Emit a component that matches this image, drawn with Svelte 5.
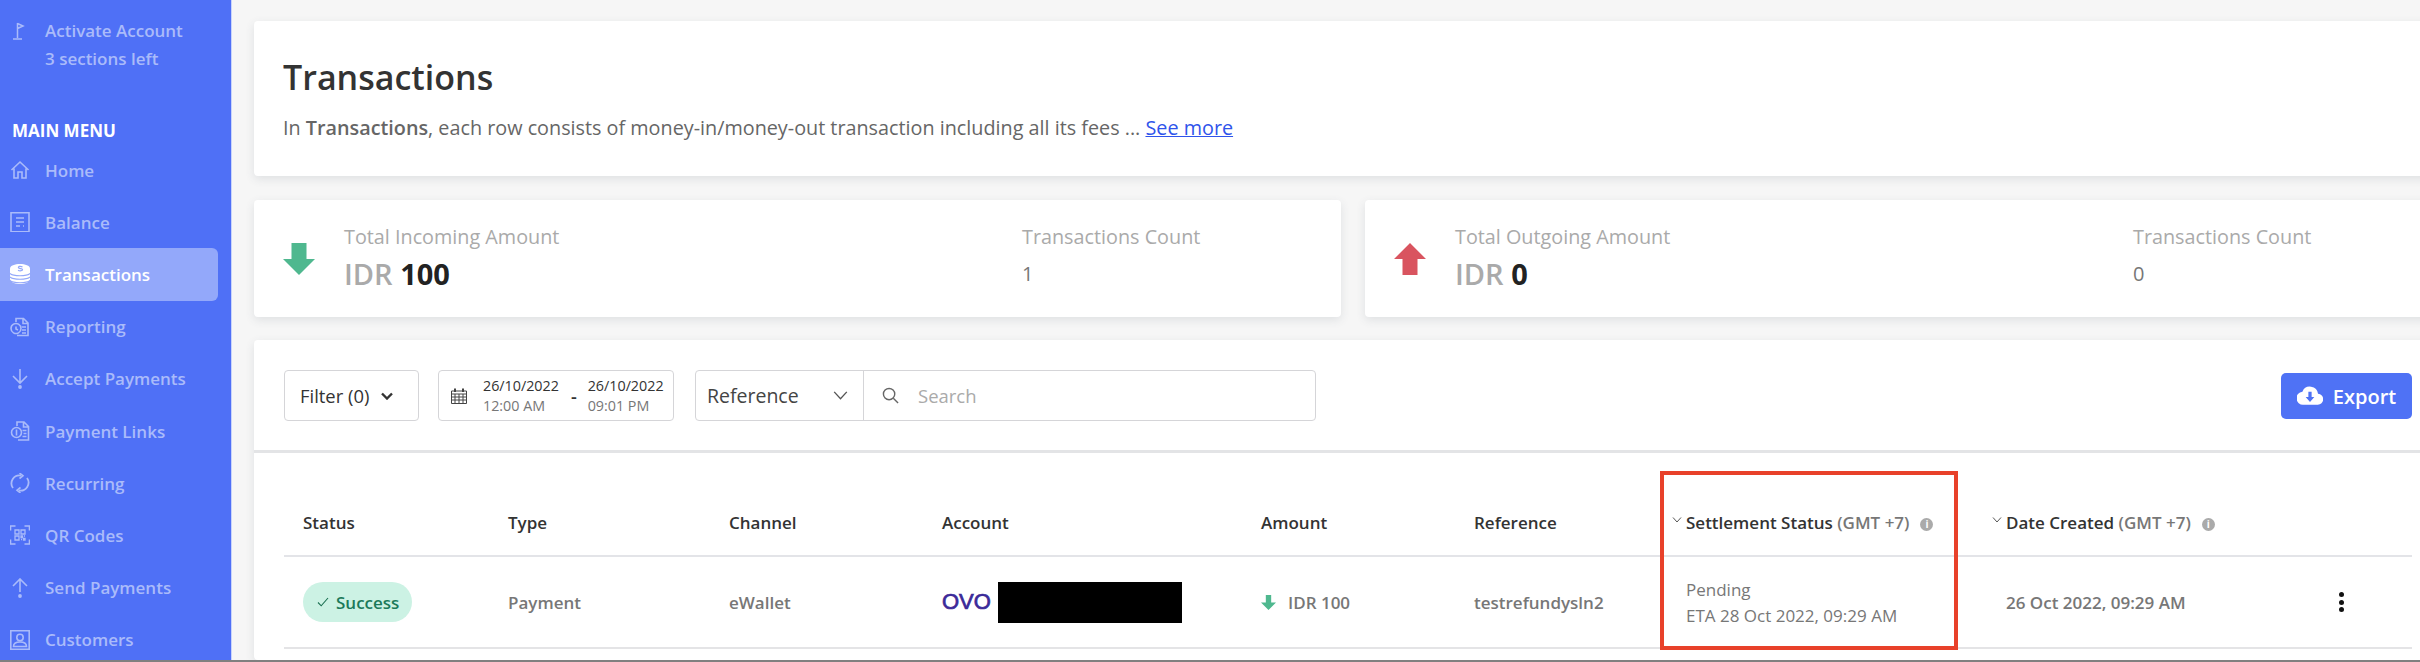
<script>
  const menu = [
    { label: 'Home', icon: 'home' },
    { label: 'Balance', icon: 'balance' },
    { label: 'Transactions', icon: 'coins', active: true },
    { label: 'Reporting', icon: 'report' },
    { label: 'Accept Payments', icon: 'accept' },
    { label: 'Payment Links', icon: 'links' },
    { label: 'Recurring', icon: 'recur' },
    { label: 'QR Codes', icon: 'qr' },
    { label: 'Send Payments', icon: 'send' },
    { label: 'Customers', icon: 'customers' }
  ];
  const stats = [
    { dir: 'in', label: 'Total Incoming Amount', amount: '100', count: '1' },
    { dir: 'out', label: 'Total Outgoing Amount', amount: '0', count: '0' }
  ];
</script>

<div class="page">
  <aside class="sidebar">
    <div class="activate">
      <svg class="flag" viewBox="0 0 14 18" width="14" height="18" fill="none" stroke="currentColor" stroke-width="1.500">
        <path d="M6.500 1v15M2 17h9M6.500 1.500 12 4 6.500 6.500" />
      </svg>
      <div>
        <div>Activate Account</div>
        <div>3 sections left</div>
      </div>
    </div>
    <div class="menu-title">MAIN MENU</div>
    <nav>
      {#each menu as item}
        <div class="item" class:active={item.active}>
          <svg viewBox="0 0 20 20" width="20" height="20" fill="none" stroke="currentColor" stroke-width="1.600">
            {#if item.icon === 'home'}
              <path d="M1.500 10 10 2l8.500 8M4 8.500V18h4v-6h4v6h4V8.500" />
            {:else if item.icon === 'balance'}
              <path d="M1 .8h18v19H1zM6 6h8M6 10h8M6 14h4M13 14h1" />
            {:else if item.icon === 'coins'}
              <path fill="currentColor" stroke="none" d="M10 0c5 0 10 1.500 10 4.500V15c0 3-5 5-10 5S0 18 0 15V4.500C0 1.500 5 0 10 0z" />
              <path stroke="#93a8fa" stroke-width="1.200" d="M0 9.500c3 3 17 3 20 0M0 13c3 3 17 3 20 0M0 16.500c3 3 17 3 20 0M12.500 3c-2-1.200-4.500-.5-4 .7s3.800.6 4 1.800-2.500 1.800-4.500.7" />
            {:else if item.icon === 'report'}
              <path d="M6 5V1.500h7.500L18 6v12.500H7M13 2v4.500h5M1 11.500a5 5 0 1 1 0 .01M6 9.500v2.500l2 1M12 10h4M12 13h4M12 16h4" />
            {:else if item.icon === 'accept'}
              <path d="M10 0v13M3 7l7 7 7-7" />
              <circle cx="10" cy="18" r="1.900" fill="currentColor" stroke="none" />
            {:else if item.icon === 'links'}
              <path d="M7 5V1h7l4.500 4.500V19H8M13.500 1.500V6h5" />
              <circle cx="6.500" cy="11.500" r="5" />
              <path d="M6.500 8.500v6M12.500 9.500h4M13.500 12.500h3M12.500 15.500h4" />
            {:else if item.icon === 'recur'}
              <path d="M3 15a8 8 0 0 1 8-12.500M17 5a8 8 0 0 1-8 12.500" stroke-width="1.800" />
              <path d="M9.500 0 13 2.800 9.500 5.500M10.500 14.500 7 17.200l3.500 2.800" />
            {:else if item.icon === 'qr'}
              <path d="M.5 5.500V1h5M14.500 1h5v4.500M19.500 14.500V19h-5M5.500 19h-5v-4.500" />
              <path stroke-width="1.300" d="M5 5h4v4H5zM11 5h4v4h-4zM5 11h4v4H5zM11 11h1.500v1.500H11zM13.500 13.500H15V15h-1.500zM11 14.500h1M14 11h1" />
            {:else if item.icon === 'send'}
              <path d="M10 14V1M3 8l7-7 7 7" />
              <circle cx="10" cy="18" r="1.900" fill="currentColor" stroke="none" />
            {:else}
              <path d="M.8.800h18.400v18.400H.8z" />
              <circle cx="10" cy="7.500" r="3.200" />
              <path d="M3.500 16.500c0-3 3-4.500 6.500-4.500s6.500 1.500 6.500 4.500z" />
            {/if}
          </svg>
          <span>{item.label}</span>
        </div>
      {/each}
    </nav>
  </aside>

  <main>
    <section class="card head">
      <h1>Transactions</h1>
      <p>In <strong>Transactions</strong>, each row consists of money-in/money-out transaction including all its fees ... <a href="#more">See more</a></p>
    </section>

    <div class="stats">
      {#each stats as s}
        <section class="card stat">
          <svg class="big-arrow" viewBox="0 0 32 32" width="32" height="32">
            {#if s.dir === 'in'}
              <path fill="#4fb88f" d="M8.500 0h15v16H32L16 32 0 16h8.500z" />
            {:else}
              <path fill="#d9545f" d="M16 0l16 16h-8.500v16h-15V16H0z" />
            {/if}
          </svg>
          <div class="stat-main">
            <div class="stat-label">{s.label}</div>
            <div class="stat-value">IDR <b>{s.amount}</b></div>
          </div>
          <div class="stat-count">
            <div class="stat-label">Transactions Count</div>
            <div class="count">{s.count}</div>
          </div>
        </section>
      {/each}
    </div>

    <section class="card panel">
      <div class="toolbar">
        <button class="box filter">Filter (0)
          <svg viewBox="0 0 12 8" width="12" height="8" fill="none" stroke="#333" stroke-width="2.400"><path d="M1 1.500l5 5 5-5" /></svg>
        </button>
        <div class="box dates">
          <svg viewBox="0 0 16 16" width="16" height="16" fill="none" stroke="#444" stroke-width="1">
            <path d="M.5 3h15v12.500H.5zM.5 6h15M.5 9h15M.5 12h15M4 6v9.500M8 6v9.500M12 6v9.500" />
            <path d="M4 .5v3.500M12 .5v3.500" stroke-width="2" />
          </svg>
          <div class="date"><span>26/10/2022</span><span class="time">12:00 AM</span></div>
          <span class="dash">-</span>
          <div class="date"><span>26/10/2022</span><span class="time">09:01 PM</span></div>
        </div>
        <div class="box searchbox">
          <div class="ref">Reference
            <svg viewBox="0 0 16 10" width="15" height="9" fill="none" stroke="#555" stroke-width="1.500"><path d="M1 1l7 7.500L15 1" /></svg>
          </div>
          <div class="search">
            <svg viewBox="0 0 18 18" width="17" height="17" fill="none" stroke="#666" stroke-width="1.500"><circle cx="7.500" cy="7.500" r="6" /><path d="M12 12l5 5" /></svg>
            <span>Search</span>
          </div>
        </div>
        <button class="export">
          <svg viewBox="0 0 24 20" width="26" height="22"><path fill="#fff" d="M19.400 8A7.500 7.500 0 0 0 5 6 6 6 0 0 0 6 18h13a5 5 0 0 0 .4-10z" /><path fill="#4f72f5" d="M10.500 6h3v5H16l-4 4.500L8 11h2.500z" /></svg>
          Export
        </button>
      </div>

      <div class="table-wrap">
        <table>
          <colgroup>
            <col style="width:224px" /><col style="width:221px" /><col style="width:213px" /><col style="width:319px" />
            <col style="width:213px" /><col style="width:186px" /><col style="width:320px" /><col style="width:359px" /><col />
          </colgroup>
          <thead>
            <tr>
              <th>Status</th>
              <th>Type</th>
              <th>Channel</th>
              <th>Account</th>
              <th>Amount</th>
              <th>Reference</th>
              <th class="sorted">
                <svg class="caret" viewBox="0 0 10 6" width="10" height="6" fill="none" stroke="#555"><path d="M1 .5l4 4.500 4-4.500" /></svg>
                Settlement Status <em>(GMT +7)</em><i class="info">i</i>
              </th>
              <th class="sorted">
                <svg class="caret" viewBox="0 0 10 6" width="10" height="6" fill="none" stroke="#555"><path d="M1 .5l4 4.500 4-4.500" /></svg>
                Date Created <em>(GMT +7)</em><i class="info">i</i>
              </th>
              <th></th>
            </tr>
          </thead>
          <tbody>
            <tr>
              <td><span class="pill"><svg viewBox="0 0 12 10" width="12" height="10" fill="none" stroke="#1b6f52" stroke-width="1.100"><path d="M1 5.500 4.200 8.800 11 1" /></svg>Success</span></td>
              <td>Payment</td>
              <td>eWallet</td>
              <td><div class="account"><span class="ovo">OVO</span><span class="redact"></span></div></td>
              <td>
                <div class="amount">
                  <svg viewBox="0 0 14 14" width="15" height="15"><path fill="#4fb88f" d="M4.500 0h5v7H14l-7 7-7-7h4.500z" /></svg>
                  IDR 100
                </div>
              </td>
              <td>testrefundysln2</td>
              <td class="sorted"><div class="pending">Pending</div><div>ETA 28 Oct 2022, 09:29 AM</div></td>
              <td class="sorted">26 Oct 2022, 09:29 AM</td>
              <td class="more"><span></span><span></span><span></span></td>
            </tr>
          </tbody>
        </table>
        <div class="highlight"></div>
      </div>
    </section>
  </main>
</div>

<style>
  :global(body) {
    margin: 0;
    background: #f6f6f6;
    overflow: hidden;
  }
  .page {
    display: flex;
    width: 2420px;
    height: 660px;
    border-bottom: 2px solid #808080;
    overflow: hidden;
    font-family: "Open Sans", "Noto Sans", sans-serif;
    color: #333;
  }
  .sidebar {
    flex: 0 0 232px;
    background: #4f70f6;
    color: #aabbfa;
    font-weight: 600;
    font-size: 17px;
    box-sizing: border-box;
    padding-top: 17px;
    border-right: 1px solid #c8d3fb;
  }
  .activate {
    display: flex;
    align-items: flex-start;
    line-height: 27.500px;
    padding-left: 11px;
    gap: 20px;
  }
  .flag {
    margin-top: 5px;
  }
  .menu-title {
    color: #fff;
    font-weight: 700;
    padding-left: 12px;
    margin-top: 48px;
    line-height: 22px;
  }
  nav {
    margin-top: 2px;
  }
  .item {
    display: flex;
    align-items: center;
    gap: 15px;
    width: 218px;
    height: 52.200px;
    box-sizing: border-box;
    padding-left: 10px;
    border-radius: 0 6px 6px 0;
  }
  .item.active {
    background: #93a8fa;
    color: #fff;
  }
  main {
    flex: 1;
    min-width: 0;
    padding: 21px 0 0 22px;
  }
  .card {
    background: #fff;
    border-radius: 4px;
    box-shadow: 0 3px 10px rgba(60, 70, 90, 0.12);
    width: 2300px;
  }
  .head {
    height: 155px;
    box-sizing: border-box;
    padding: 35px 29px 0;
  }
  h1 {
    margin: 0;
    font-size: 34px;
    font-weight: 600;
    line-height: 42px;
    color: #333;
  }
  .head p {
    margin: 17px 0 0;
    font-size: 19.800px;
    line-height: 26px;
    color: #666;
  }
  .head strong {
    font-weight: 600;
  }
  .head a {
    color: #2f54eb;
  }
  .stats {
    display: flex;
    gap: 24px;
    margin-top: 24px;
    width: 2300px;
  }
  .stat {
    flex: 0 0 1087px;
    height: 117px;
    box-sizing: border-box;
    display: flex;
    align-items: center;
    padding-left: 29px;
  }
  .stat-main {
    width: 678px;
    margin-left: 29px;
  }
  .stat-label {
    font-size: 19.800px;
    line-height: 26px;
    color: #aaa;
  }
  .stat-value {
    font-size: 29px;
    font-weight: 600;
    line-height: 38px;
    margin-top: 5px;
    color: #aaa;
  }
  .stat-value b {
    color: #222;
    font-weight: 700;
  }
  .count {
    font-size: 20px;
    line-height: 38px;
    margin-top: 5px;
    color: #777;
  }
  .panel {
    margin-top: 23px;
    height: 320px;
    box-sizing: border-box;
  }
  .toolbar {
    display: flex;
    align-items: flex-start;
    height: 113px;
    box-sizing: border-box;
    padding: 30px 0 0 30px;
    border-bottom: 3px solid #e3e4e6;
    width: 2300px;
  }
  .box {
    height: 51px;
    box-sizing: border-box;
    border: 1px solid #d5d5d8;
    border-radius: 4px;
    background: #fff;
    display: flex;
    align-items: center;
    font-family: inherit;
  }
  .filter {
    width: 135px;
    font-size: 18.400px;
    color: #333;
    padding: 0 0 0 15px;
    gap: 12px;
  }
  .dates {
    margin-left: 19px;
    width: 236px;
    padding-left: 12px;
    font-size: 14.300px;
    color: #333;
  }
  .date {
    display: flex;
    flex-direction: column;
    line-height: 20px;
    margin-left: 16px;
  }
  .dates .date:last-child {
    margin-left: 11px;
  }
  .time {
    color: #777;
  }
  .dash {
    margin-left: 12px;
    font-size: 18px;
    font-weight: 600;
  }
  .searchbox {
    margin-left: 21px;
    width: 621px;
    font-size: 18.500px;
  }
  .ref {
    width: 168px;
    height: 100%;
    box-sizing: border-box;
    border-right: 1px solid #d5d5d8;
    display: flex;
    align-items: center;
    justify-content: space-between;
    padding: 0 15px 0 11px;
    font-size: 19.500px;
    color: #444;
  }
  .search {
    display: flex;
    align-items: center;
    gap: 19px;
    padding-left: 18px;
    color: #aaa;
  }
  .export {
    margin-left: 965px;
    width: 131px;
    height: 46px;
    margin-top: 3px;
    border: 0;
    border-radius: 5px;
    background: #4f72f5;
    color: #fff;
    font-family: inherit;
    font-size: 20px;
    font-weight: 600;
    display: flex;
    align-items: center;
    justify-content: center;
    gap: 10px;
    padding: 0;
  }
  .table-wrap {
    position: relative;
    margin-left: 30px;
    width: 2128px;
  }
  table {
    width: 2128px;
    table-layout: fixed;
    border-collapse: collapse;
    font-size: 17px;
  }
  th {
    height: 103px;
    box-sizing: border-box;
    padding: 37px 0 0 0;
    text-align: left;
    font-weight: 600;
    color: #333;
    border-bottom: 2px solid #e3e4e8;
    font-size: 17px;
    vertical-align: middle;
    white-space: nowrap;
  }
  th:first-child,
  td:first-child {
    padding-left: 19px;
  }
  td {
    height: 92px;
    padding: 0;
    box-sizing: border-box;
    border-bottom: 2px solid #e4e4e6;
    font-weight: 600;
    color: #777;
    vertical-align: middle;
  }
  th.sorted {
    padding-left: 26px;
    position: relative;
  }
  td.sorted {
    padding-left: 26px;
  }
  .caret {
    position: absolute;
    left: 12px;
    top: 64px;
  }
  th em {
    font-style: normal;
    color: #777;
    font-size: 17px;
  }
  .info {
    display: inline-block;
    width: 13px;
    height: 13px;
    line-height: 13px;
    margin-left: 11px;
    border-radius: 50%;
    background: #aaa;
    color: #fff;
    font-style: normal;
    font-size: 10px;
    font-weight: 700;
    text-align: center;
    vertical-align: 1px;
  }
  .pill {
    display: inline-flex;
    align-items: center;
    gap: 7px;
    width: 109px;
    height: 40px;
    box-sizing: border-box;
    padding-left: 14px;
    border-radius: 20px;
    background: #ccf2e4;
    color: #1b7a5a;
  }
  .account {
    display: flex;
    align-items: center;
    gap: 7px;
  }
  .ovo {
    width: 49px;
    font-family: "Liberation Sans", sans-serif;
    font-weight: 400;
    font-size: 22px;
    line-height: 22px;
    color: #3b2a98;
    -webkit-text-stroke: 0.7px #3b2a98;
    white-space: nowrap;
  }
  .redact {
    width: 184px;
    height: 41px;
    background: #000;
  }
  .amount {
    display: flex;
    align-items: center;
    gap: 12px;
  }
  .pending {
    margin-bottom: 5px;
  }
  td:nth-child(7) {
    line-height: 21px;
    font-weight: 500;
  }
  .more {
    padding-left: 0;
  }
  .more span {
    display: block;
    width: 5px;
    height: 5px;
    margin: 2.500px 0;
    border-radius: 50%;
    background: #111;
  }
  .highlight {
    position: absolute;
    left: 1376px;
    top: 18px;
    width: 298px;
    height: 179px;
    box-sizing: border-box;
    border: 4px solid #e8412a;
    pointer-events: none;
  }
</style>
